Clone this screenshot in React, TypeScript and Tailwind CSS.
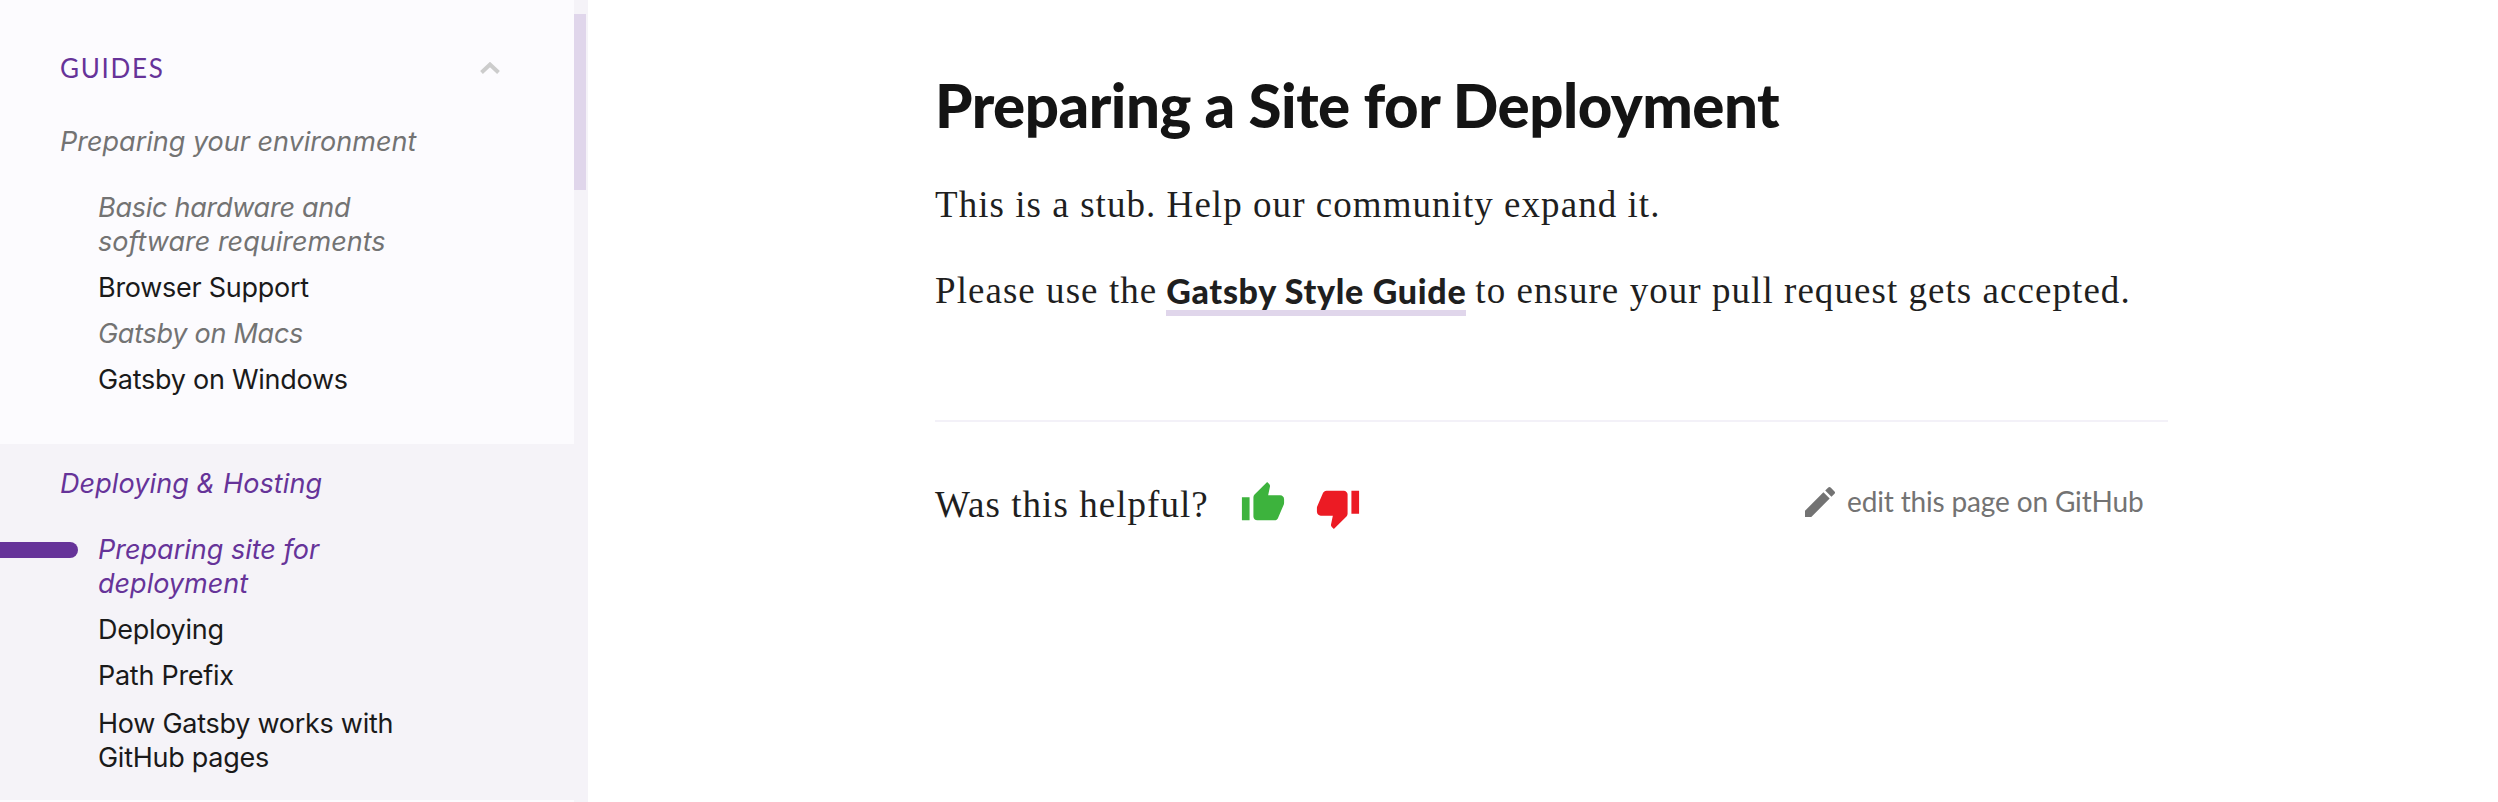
type ItemProps = { lines: string[]; tone: string };

function Item({ lines, tone }: ItemProps) {
  return (
    <div className={tone}>
      {lines.map((line) => (
        <div key={line} className="h-[34px]">
          {line}
        </div>
      ))}
    </div>
  );
}

const draft = "italic tracking-[-0.26px] text-[#737373]";
const active = "italic text-[#663399]";
const plain = "tracking-[-0.27px] text-[#1a1a1a]";

function Sidebar() {
  return (
    <aside className="flex w-[588px] shrink-0 bg-[#f5f3f8]">
      <nav className="w-[574px] whitespace-nowrap bg-[#fcfbfe] font-['Inter',sans-serif] text-[27px] leading-[34px]">
        <section className="h-[444px] pl-[60px] pt-[51px]">
          <div className="flex h-[74px] justify-between pr-[74px]">
            <h2 className="h-[34px] font-['Lato',sans-serif] text-[26px] tracking-[1.7px] text-[#663399]">GUIDES</h2>
            <svg className="mt-[11px] h-[12px] w-[20px]" viewBox="0 0 20 12" fill="none" stroke="#cccccc" strokeWidth="4">
              <path d="M1.5 10.5 10 2.5l8.5 8" />
            </svg>
          </div>
          <div className="italic text-[#737373]">Preparing your environment</div>
          <div className="mt-8 flex flex-col gap-3 pl-[38px]">
            <div className="italic text-[#737373]">
              <div className="h-[34px] tracking-[-0.26px]">Basic hardware and</div>
              <div className="h-[34px]">software requirements</div>
            </div>
            <Item tone={plain} lines={["Browser Support"]} />
            <Item tone={draft} lines={["Gatsby on Macs"]} />
            <Item tone={plain} lines={["Gatsby on Windows"]} />
          </div>
        </section>
        <section className="h-[356px] bg-[#f5f3f8] pl-[60px] pt-[23px]">
          <div className="italic tracking-[0.1px] text-[#663399]">Deploying &amp; Hosting</div>
          <div className="mt-8 flex flex-col gap-3 pl-[38px]">
            <div className="relative">
              <span className="absolute -left-[98px] top-[9px] h-4 w-[78px] rounded-r-lg bg-[#663399]" />
              <Item tone={active} lines={["Preparing site for", "deployment"]} />
            </div>
            <Item tone={plain} lines={["Deploying"]} />
            <Item tone={plain} lines={["Path Prefix"]} />
            <div className="pt-0.5">
              <Item tone={plain} lines={["How Gatsby works with", "GitHub pages"]} />
            </div>
          </div>
        </section>
      </nav>
      <div className="mt-[14px] h-[176px] w-3 bg-[#e0d6eb]" />
    </aside>
  );
}

export default function App() {
  return (
    <div className="flex h-[802px] w-[2498px] overflow-hidden bg-white text-[#1f1f1f]">
      <Sidebar />
      <main className="ml-[347px] w-[1233px] whitespace-nowrap font-['Liberation_Serif',serif] text-[37px] leading-[50px] tracking-[1.05px]">
        <h1 className="h-[180px] pt-[70px] font-['Lato',sans-serif] text-[60px] font-black leading-[70px] tracking-[-0.5px] text-[#141414]">
          Preparing a Site for Deployment
        </h1>
        <p className="h-[86px]">This is a stub. Help our community expand it.</p>
        <p className="flex h-[50px]">
          <span>Please use the</span>
          <a className="ml-[9px] h-[50px] border-b-[6px] border-[#e0d6eb] font-['Lato',sans-serif] text-[34px] font-black tracking-[0.68px]">
            Gatsby Style Guide
          </a>
          <span className="ml-[9px]">to ensure your pull request gets accepted.</span>
        </p>
        <hr className="mt-[104px] border-t-2 border-[#f3f1f8]" />
        <div className="flex items-start">
          <span className="mt-[58px] w-[305px]">Was this helpful?</span>
          <svg className="mt-[58px] h-[46px] w-[46px]" viewBox="0 0 24 24" fill="#3db33d">
            <path d="M1 21h4V9H1v12zm22-11c0-1.1-.9-2-2-2h-6.31l.95-4.57.03-.32c0-.41-.17-.79-.44-1.06L14.17 1 7.59 7.59C7.22 7.95 7 8.45 7 9v10c0 1.1.9 2 2 2h9c.83 0 1.54-.5 1.84-1.22l3.02-7.05c.09-.23.14-.47.14-.73v-2z" />
          </svg>
          <svg className="ml-[29px] mt-[63px] h-[46px] w-[46px]" viewBox="0 0 24 24" fill="#ec1b24">
            <path d="M15 3H6c-.83 0-1.54.5-1.84 1.22l-3.02 7.05c-.09.23-.14.47-.14.73v2c0 1.1.9 2 2 2h6.31l-.95 4.57-.03.32c0 .41.17.79.44 1.06L9.83 23l6.59-6.59c.36-.36.58-.86.58-1.41V5c0-1.1-.9-2-2-2zm4 0v12h4V3h-4z" />
          </svg>
          <a className="ml-[439px] mt-[54px] flex font-['Lato',sans-serif] text-[28px] tracking-[-0.15px] text-[#737373]">
            <svg className="mr-[7px] mt-[6px] h-[40px] w-[40px]" viewBox="0 0 24 24" fill="#737373">
              <path d="M3 17.25V21h3.75L17.81 9.94l-3.75-3.75L3 17.25zM20.71 7.04c.39-.39.39-1.02 0-1.41l-2.34-2.34a.9959.9959 0 0 0-1.41 0l-1.83 1.83 3.75 3.75 1.83-1.83z" />
            </svg>
            <span>edit this page on GitHub</span>
          </a>
        </div>
      </main>
    </div>
  );
}
